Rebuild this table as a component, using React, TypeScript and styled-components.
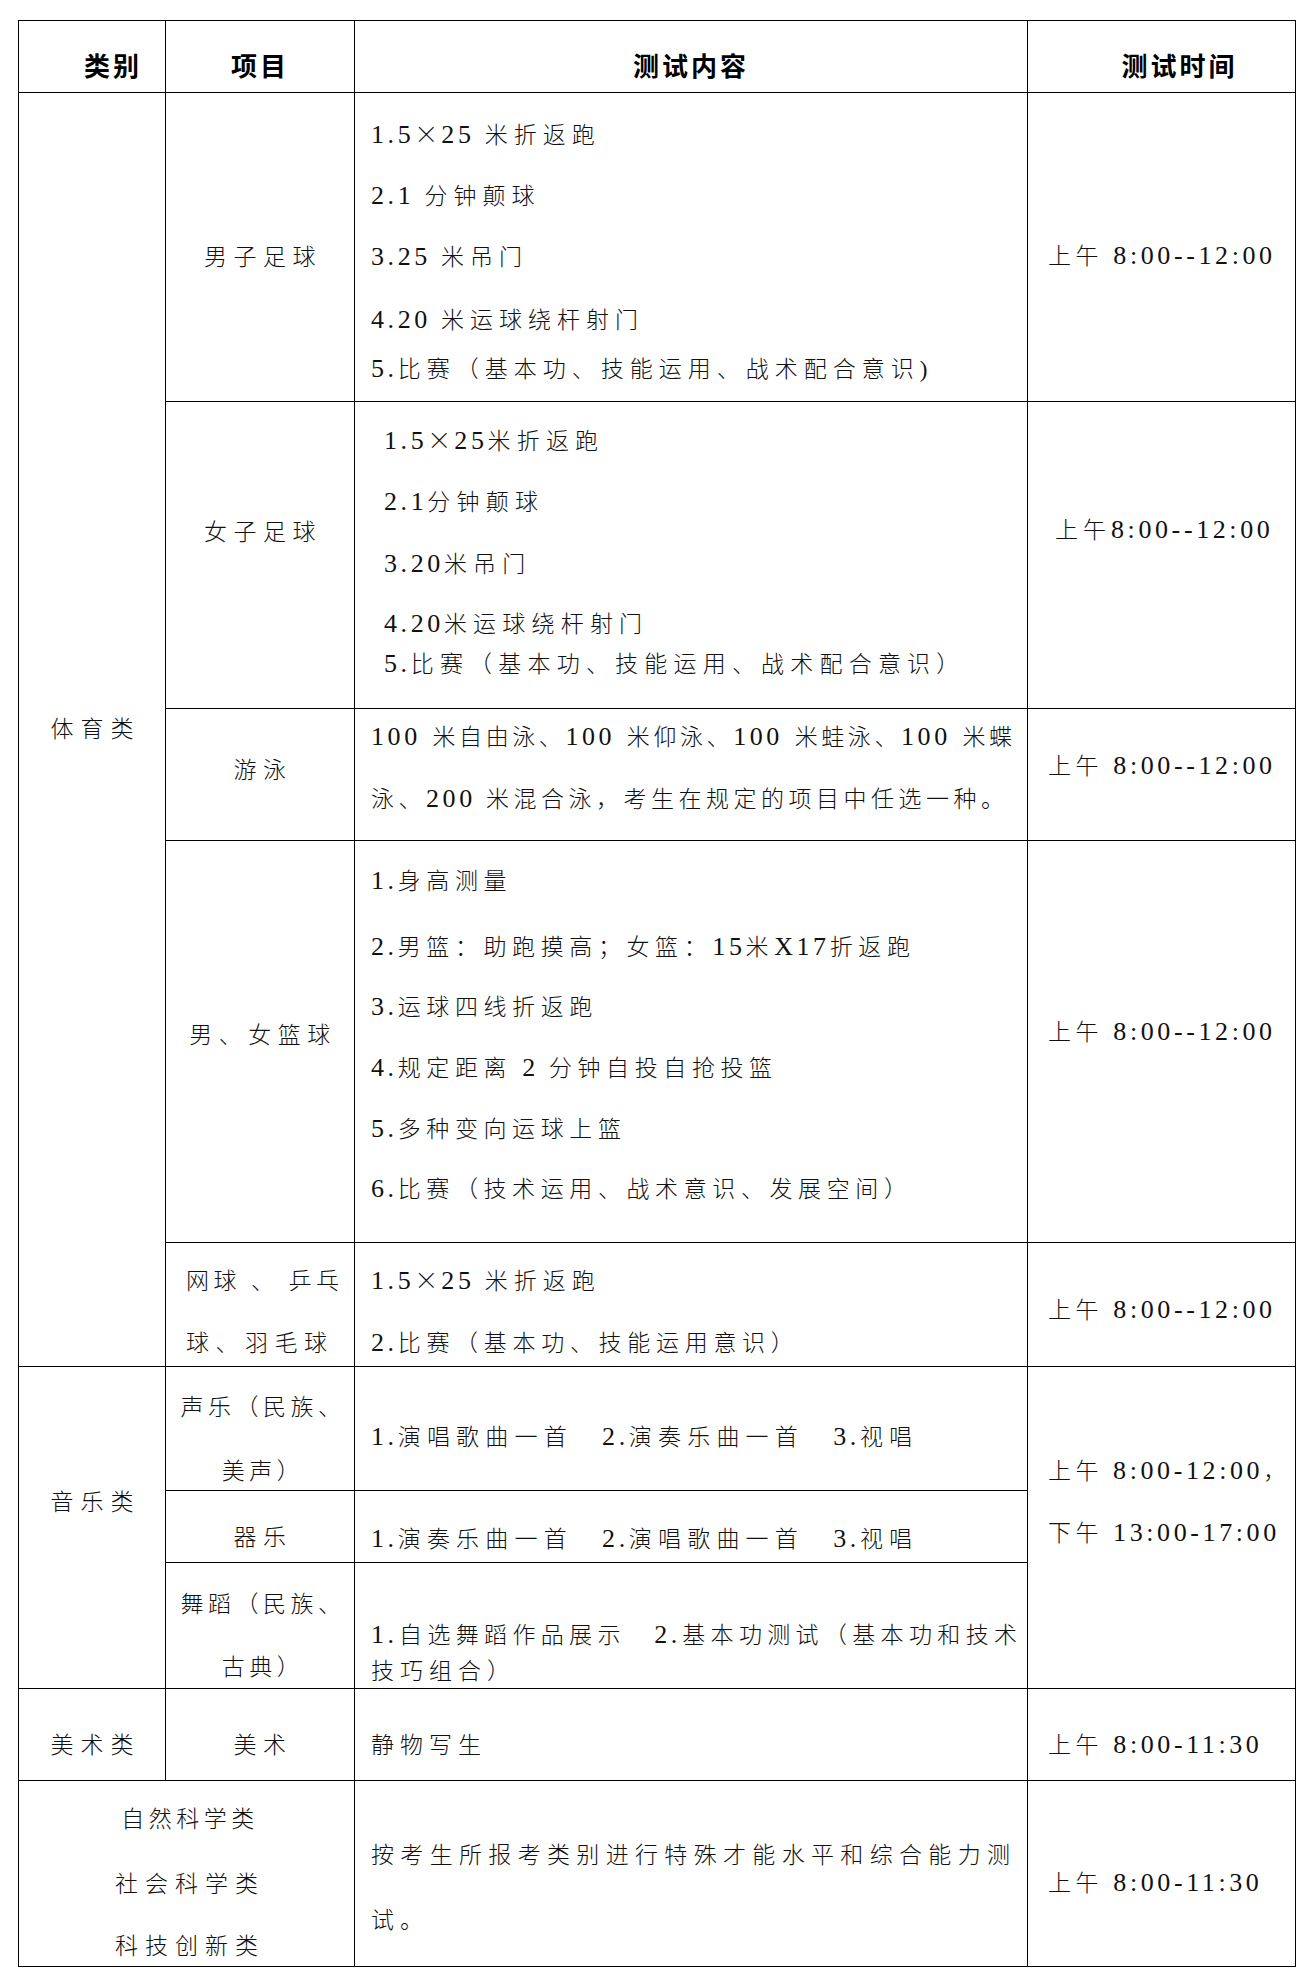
import React from "react";
import styled, { createGlobalStyle } from "styled-components";

const GlobalStyle = createGlobalStyle`
  html, body {
    margin: 0;
    padding: 0;
    background: #ffffff;
  }
`;

// latin runs (digits, dots, colons) are set a bit larger and tighter than the CJK text
const LATIN_RUN = /([0-9A-Za-z.:,\- ]+|×)/;
const IS_LATIN = /^[0-9A-Za-z.:,\- ]+$/;

function rich(text: string) {
  return text
    .split(LATIN_RUN)
    .filter(Boolean)
    .map((part, i) => {
      if (part === "×") return <Cross key={i}>×</Cross>;
      if (IS_LATIN.test(part)) return <Num key={i}>{part}</Num>;
      return <React.Fragment key={i}>{part}</React.Fragment>;
    });
}

type TextProps = {
  children: string;
  $mt?: number;
  $ls?: number;
  $justify?: boolean;
};

function T({ children, ...rest }: TextProps) {
  return <Line {...rest}>{rich(children)}</Line>;
}

function App() {
  return (
    <>
      <GlobalStyle />
      <Page>
        <Table>
          <colgroup>
            <col style={{ width: 147 }} />
            <col style={{ width: 189 }} />
            <col style={{ width: 673 }} />
            <col style={{ width: 268 }} />
          </colgroup>
          <tbody>
            <Row $h={72}>
              <HeadCell $align="right" $pr={23}>类别</HeadCell>
              <HeadCell>项目</HeadCell>
              <HeadCell>测试内容</HeadCell>
              <HeadCell $pl={36}>测试时间</HeadCell>
            </Row>

            <Row $h={309}>
              <CategoryCell rowSpan={5} $pt={622}>
                <T>体育类</T>
              </CategoryCell>
              <ItemCell $pt={150}>
                <T>男子足球</T>
              </ItemCell>
              <ContentCell $pt={28}>
                <T>1.5×25 米折返跑</T>
                <T $mt={31}>2.1 分钟颠球</T>
                <T $mt={31}>3.25 米吊门</T>
                <T $mt={33}>4.20 米运球绕杆射门</T>
                <T $mt={19}>5.比赛（基本功、技能运用、战术配合意识)</T>
              </ContentCell>
              <TimeCell $pt={149}>
                <T>上午 8:00--12:00</T>
              </TimeCell>
            </Row>

            <Row $h={307}>
              <ItemCell $pt={116}>
                <T>女子足球</T>
              </ItemCell>
              <ContentCell $pt={25} $pl={29} $ls={6.2}>
                <T>1.5×25米折返跑</T>
                <T $mt={31}>2.1分钟颠球</T>
                <T $mt={32}>3.20米吊门</T>
                <T $mt={30}>4.20米运球绕杆射门</T>
                <T $mt={10}>5.比赛（基本功、技能运用、战术配合意识）</T>
              </ContentCell>
              <TimeCell $pt={114} $pl={27} $ls={5}>
                <T>上午8:00--12:00</T>
              </TimeCell>
            </Row>

            <Row $h={132}>
              <ItemCell $pt={47}>
                <T>游泳</T>
              </ItemCell>
              <ContentCell $pt={14}>
                <T $justify $ls={2}>
                  100 米自由泳、100 米仰泳、100 米蛙泳、100 米蝶
                </T>
                <T $mt={32} $ls={4.5}>
                  泳、200 米混合泳，考生在规定的项目中任选一种。
                </T>
              </ContentCell>
              <TimeCell $pt={43}>
                <T>上午 8:00--12:00</T>
              </TimeCell>
            </Row>

            <Row $h={402}>
              <ItemCell $pt={180}>
                <T>男、女篮球</T>
              </ItemCell>
              <ContentCell $pt={26} $ls={5.6}>
                <T>1.身高测量</T>
                <T $mt={36}>2.男篮：助跑摸高；女篮：15米X17折返跑</T>
                <T $mt={30}>3.运球四线折返跑</T>
                <T $mt={31}>4.规定距离 2 分钟自投自抢投篮</T>
                <T $mt={31}>5.多种变向运球上篮</T>
                <T $mt={30}>6.比赛（技术运用、战术意识、发展空间）</T>
              </ContentCell>
              <TimeCell $pt={177}>
                <T>上午 8:00--12:00</T>
              </TimeCell>
            </Row>

            <Row $h={124}>
              <ItemCell $pt={24} $align="left" $pl={20} $pr={14}>
                <Line $justify $ls={1}>网球 、 乒乓</Line>
                <Line $mt={32}>球、羽毛球</Line>
              </ItemCell>
              <ContentCell $pt={24}>
                <T>1.5×25 米折返跑</T>
                <T $mt={32} $ls={5.7}>2.比赛（基本功、技能运用意识）</T>
              </ContentCell>
              <TimeCell $pt={53}>
                <T>上午 8:00--12:00</T>
              </TimeCell>
            </Row>

            <Row $h={124}>
              <CategoryCell rowSpan={3} $pt={121}>
                <T>音乐类</T>
              </CategoryCell>
              <ItemCell $pt={26} $ls={4.5}>
                <T>声乐（民族、</T>
                <T $mt={34}>美声）</T>
              </ItemCell>
              <ContentCell $pt={56} $ls={6.2}>
                <T>1.演唱歌曲一首　2.演奏乐曲一首　3.视唱</T>
              </ContentCell>
              <TimeCell rowSpan={3} $pt={90} $ls={4.5}>
                <T>上午 8:00-12:00，</T>
                <T $mt={32}>下午 13:00-17:00</T>
              </TimeCell>
            </Row>

            <Row $h={72}>
              <ItemCell $pt={32}>
                <T>器乐</T>
              </ItemCell>
              <ContentCell $pt={34} $ls={6.2}>
                <T>1.演奏乐曲一首　2.演唱歌曲一首　3.视唱</T>
              </ContentCell>
            </Row>

            <Row $h={126}>
              <ItemCell $pt={27} $ls={4.5}>
                <T>舞蹈（民族、</T>
                <T $mt={33}>古典）</T>
              </ItemCell>
              <ContentCell $pt={58} $pr={6}>
                <T $justify $ls={4}>1.自选舞蹈作品展示　2.基本功测试（基本功和技术</T>
                <T $mt={6}>技巧组合）</T>
              </ContentCell>
            </Row>

            <Row $h={92}>
              <CategoryCell $pt={42}>
                <T>美术类</T>
              </CategoryCell>
              <ItemCell $pt={42}>
                <T>美术</T>
              </ItemCell>
              <ContentCell $pt={42}>
                <T>静物写生</T>
              </ContentCell>
              <TimeCell $pt={42}>
                <T>上午 8:00-11:30</T>
              </TimeCell>
            </Row>

            <Row $h={186}>
              <CategoryCell colSpan={2} $pt={24}>
                <T $ls={4.5}>自然科学类</T>
                <T $mt={35}>社会科学类</T>
                <T $mt={32}>科技创新类</T>
              </CategoryCell>
              <ContentCell $pt={60}>
                <T $justify $ls={4}>按考生所报考类别进行特殊才能水平和综合能力测</T>
                <T $mt={35}>试。</T>
              </ContentCell>
              <TimeCell $pt={88}>
                <T>上午 8:00-11:30</T>
              </TimeCell>
            </Row>
          </tbody>
        </Table>
      </Page>
    </>
  );
}

const Page = styled.main`
  padding: 20px 0 0 18px;
  min-height: 1986px;
  box-sizing: border-box;
  color: #111111;
  font-family: "Liberation Serif", "Noto Sans CJK SC", serif;
  font-weight: 300;
  font-size: 23px;
`;

const Table = styled.table`
  width: 1277px;
  table-layout: fixed;
  border-collapse: collapse;
`;

const Row = styled.tr<{ $h: number }>`
  height: ${(p) => p.$h}px;
`;

type CellProps = {
  $pt?: number;
  $pl?: number;
  $pr?: number;
  $ls?: number;
  $align?: "left" | "center" | "right";
};

const HeadCell = styled.th<CellProps>`
  border: 1px solid #000;
  padding: 29px ${(p) => p.$pr ?? 0}px 0 ${(p) => p.$pl ?? 0}px;
  vertical-align: top;
  text-align: ${(p) => p.$align ?? "center"};
  font-family: "Noto Sans CJK SC", sans-serif;
  font-weight: 700;
  font-size: 26px;
  line-height: 30px;
  letter-spacing: 3px;
  color: #000;
`;

const BodyCell = styled.td<CellProps>`
  border: 1px solid #000;
  vertical-align: top;
  box-sizing: border-box;
  padding-top: ${(p) => p.$pt ?? 0}px;
  padding-bottom: 0;
`;

const CategoryCell = styled(BodyCell)`
  text-align: center;
  padding-left: 7px;
  padding-right: 0;
  letter-spacing: ${(p) => p.$ls ?? 7}px;
`;

const ItemCell = styled(BodyCell)`
  text-align: ${(p) => p.$align ?? "center"};
  padding-left: ${(p) => p.$pl ?? 6}px;
  padding-right: ${(p) => p.$pr ?? 0}px;
  letter-spacing: ${(p) => p.$ls ?? 6.5}px;
`;

const ContentCell = styled(BodyCell)`
  text-align: left;
  padding-left: ${(p) => p.$pl ?? 16}px;
  padding-right: ${(p) => p.$pr ?? 13}px;
  letter-spacing: ${(p) => p.$ls ?? 6}px;
`;

const TimeCell = styled(BodyCell)`
  text-align: left;
  padding-left: ${(p) => p.$pl ?? 20}px;
  padding-right: 0;
  letter-spacing: ${(p) => p.$ls ?? 4.6}px;
`;

const Line = styled.div<{ $mt?: number; $ls?: number; $justify?: boolean }>`
  display: block;
  line-height: 30px;
  margin-top: ${(p) => p.$mt ?? 0}px;
  ${(p) => (p.$ls !== undefined ? `letter-spacing: ${p.$ls}px;` : "")}
  white-space: ${(p) => (p.$justify ? "normal" : "pre")};
  ${(p) =>
    p.$justify ? `text-align: justify; text-align-last: justify;` : ""}
`;

const Num = styled.span`
  font-family: "Liberation Serif", serif;
  font-size: 26px;
  line-height: 0;
  letter-spacing: 3.6px;
`;

const Cross = styled.span`
  font-family: "Noto Sans CJK SC", sans-serif;
  font-size: 24px;
  line-height: 0;
  letter-spacing: 3px;
`;

export default App;
